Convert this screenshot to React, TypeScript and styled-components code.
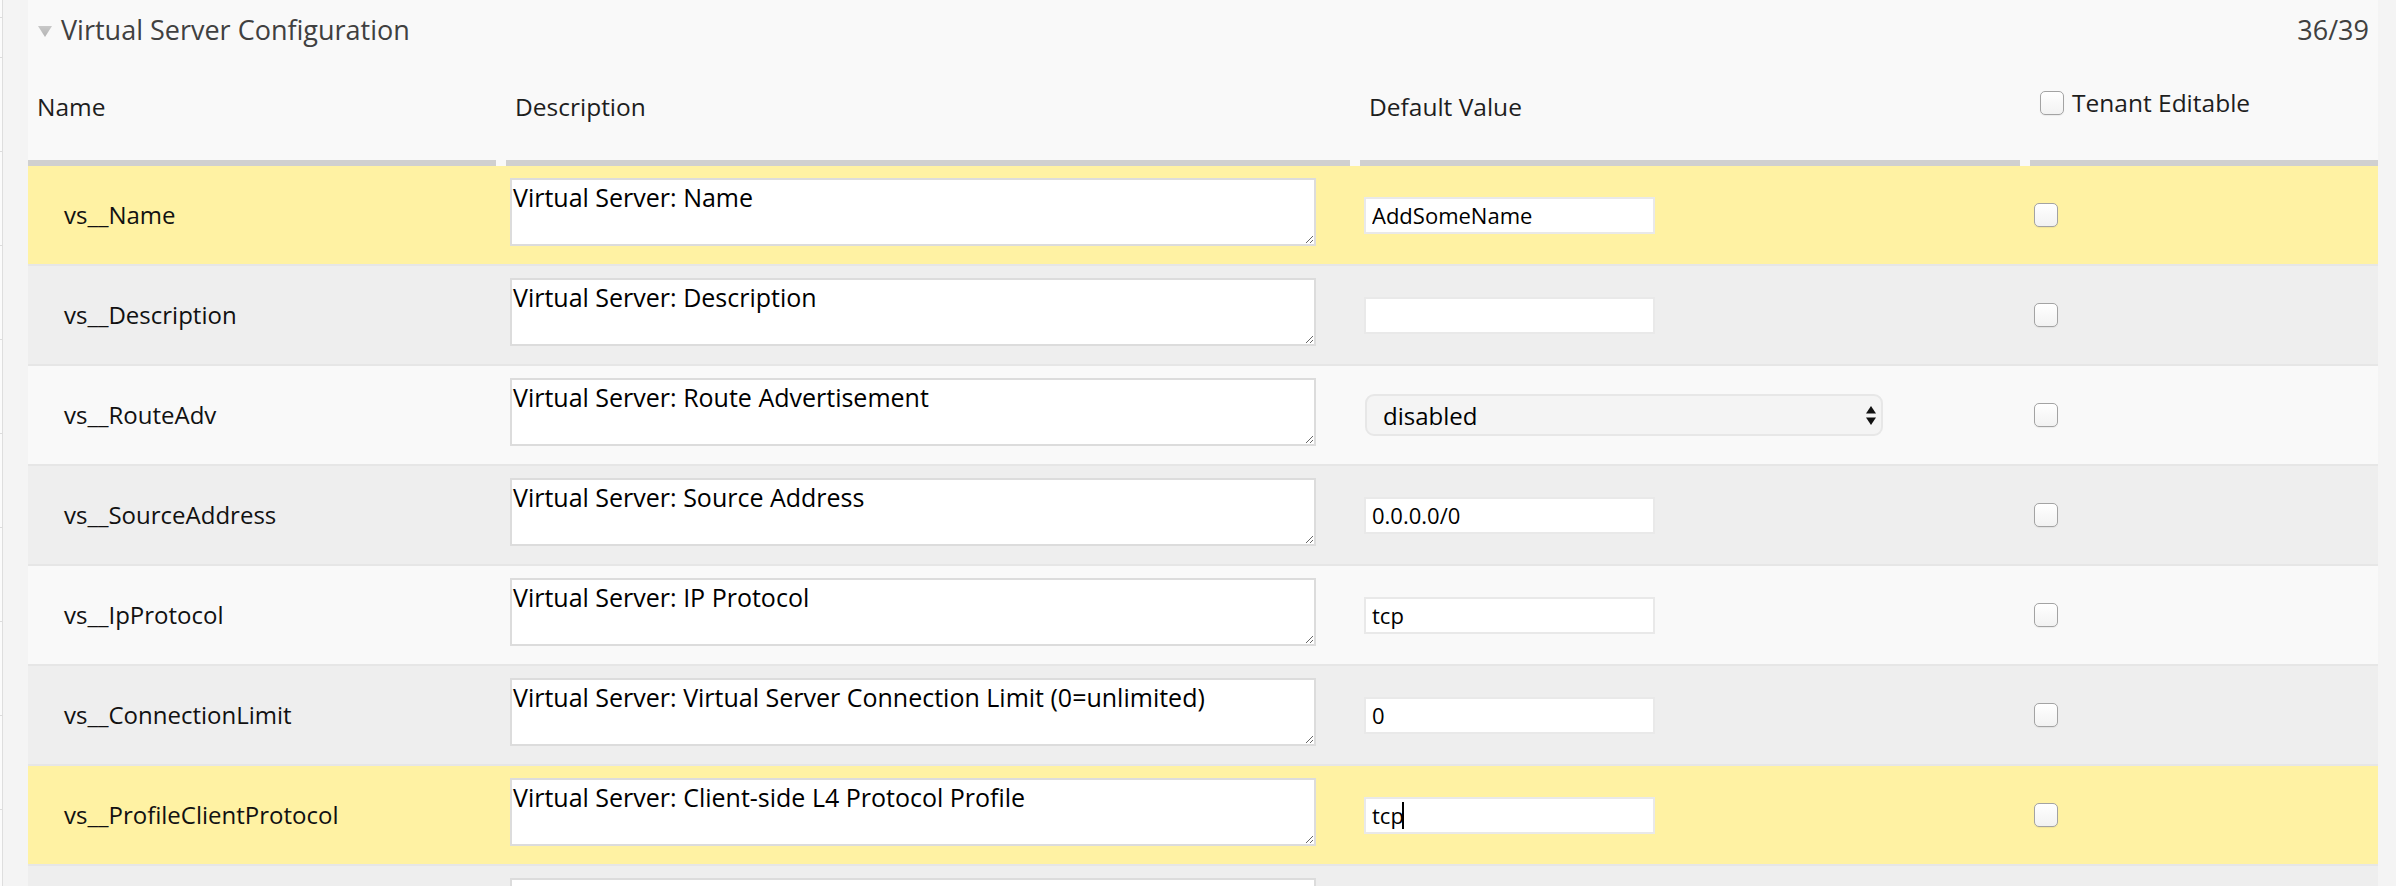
import React from "react";
import styled, { createGlobalStyle } from "styled-components";

const GlobalStyle = createGlobalStyle`
  html, body {
    margin: 0;
    padding: 0;
    overflow: hidden;
    background: #f9f9f9;
  }
  body {
    font-family: "Open Sans", "Liberation Sans", sans-serif;
  }
  *, *::before, *::after {
    box-sizing: border-box;
  }
`;

const COLUMNS = "468px 844px 660px 348px";

const Page = styled.div`
  display: flex;
  width: 2396px;
  height: 886px;
  overflow: hidden;
`;

const LeftRail = styled.div`
  flex: 0 0 28px;
  display: flex;
  background: #f4f4f4;
`;

const RailEdge = styled.div`
  width: 3px;
  background-image: repeating-linear-gradient(
    to bottom,
    #dcdcdc 0 1px,
    #fbfbfb 1px 94px
  );
  background-position: 0 57px;
  border-right: 1px solid #dedede;
`;

const RightRail = styled.div`
  flex: 0 0 18px;
  background: #f4f4f4;
`;

const Panel = styled.section`
  flex: 1 1 auto;
  min-width: 0;
  background: #f9f9f9;
`;

const TitleBar = styled.header`
  display: flex;
  justify-content: space-between;
  align-items: flex-start;
  height: 60px;
  padding: 12px 9px 0 10px;
  font-size: 27px;
  line-height: 36px;
  color: #404040;
`;

const TitleLeft = styled.div`
  display: flex;
  align-items: center;
  gap: 9px;
`;

const Caret = styled.svg`
  width: 14px;
  height: 11px;
  margin-top: 2px;
  display: block;
`;

const Counter = styled.span`
  color: #404040;
`;

const HeaderRow = styled.div`
  display: grid;
  grid-template-columns: ${COLUMNS};
  column-gap: 10px;
`;

const HeaderCell = styled.div<{ $top?: number }>`
  height: 106px;
  padding: ${(p) => p.$top ?? 31}px 10px 0 9px;
  border-bottom: 6px solid #d0d0d0;
  font-size: 24.5px;
  line-height: 32px;
  color: #1e1e1e;
`;

const HeaderLabel = styled.label`
  display: flex;
  align-items: center;
  gap: 8px;
  margin-left: 1px;
`;

const Row = styled.div<{ $tone: "yellow" | "dark" | "light" }>`
  display: grid;
  grid-template-columns: ${COLUMNS};
  column-gap: 10px;
  height: 100px;
  border-top: 2px solid #e6e6e6;
  background: ${(p) =>
    p.$tone === "yellow" ? "#fff2a3" : p.$tone === "dark" ? "#eeeeee" : "#f9f9f9"};

  &:first-child {
    height: 98px;
    border-top: 0;
  }
`;

const Cell = styled.div<{ $align?: "top" | "center" }>`
  display: flex;
  align-items: ${(p) => (p.$align === "top" ? "flex-start" : "center")};
  padding: ${(p) => (p.$align === "top" ? "12px 0 0 4px" : "0 0 0 4px")};
  min-width: 0;
`;

const NameCell = styled.div`
  display: flex;
  align-items: center;
  padding-left: 36px;
  font-size: 24px;
  line-height: 32px;
  color: #111;
  white-space: nowrap;
`;

const DescArea = styled.textarea`
  width: 806px;
  height: 68px;
  margin: 0;
  padding: 0 1px;
  border: 2px solid #dcdcdc;
  border-radius: 0;
  background: #fff;
  color: #000;
  font-family: "Open Sans", "Liberation Sans", sans-serif;
  font-size: 25px;
  line-height: 34px;
  resize: both;
  outline: none;
  overflow: hidden;
`;

const InputWrap = styled.div`
  position: relative;
  display: flex;
`;

const TextInput = styled.input`
  width: 291px;
  height: 37px;
  margin: 0;
  padding: 0 6px;
  border: 2px solid #e9e9e9;
  border-radius: 0;
  background: #fff;
  color: #000;
  font-family: "Open Sans", "Liberation Sans", sans-serif;
  font-size: 22px;
  outline: none;
`;

const TextCaret = styled.span`
  position: absolute;
  left: 38px;
  top: 5px;
  width: 2px;
  height: 27px;
  background: #000;
`;

const SelectWrap = styled.div`
  position: relative;
  width: 518px;
  height: 42px;
  margin-left: 1px;
`;

const Select = styled.select`
  appearance: none;
  -webkit-appearance: none;
  width: 100%;
  height: 100%;
  margin: 0;
  padding: 0 16px;
  border: 2px solid #e7e7e7;
  border-radius: 9px;
  background: #f4f4f4;
  color: #000;
  font-family: "Open Sans", "Liberation Sans", sans-serif;
  font-size: 24px;
  outline: none;
`;

const SelectArrows = styled.svg`
  position: absolute;
  right: 7px;
  top: 12px;
  width: 10px;
  height: 19px;
  pointer-events: none;
`;

const CheckBox = styled.input.attrs({ type: "checkbox" })`
  appearance: none;
  -webkit-appearance: none;
  flex: 0 0 auto;
  width: 24px;
  height: 24px;
  margin: 0;
  border: 1.5px solid #a3a3a3;
  border-radius: 5px;
  background: linear-gradient(#ffffff, #f2f2f2);
  box-shadow: 0 1px 1px rgba(0, 0, 0, 0.06);
`;

type Tone = "yellow" | "dark" | "light";

type Field = {
  id: string;
  name: string;
  desc: string;
  value: string;
  tone: Tone;
  kind?: "input" | "select";
  caret?: boolean;
};

const FIELDS: Field[] = [
  { id: "r1", name: "vs__Name", desc: "Virtual Server: Name", value: "AddSomeName", tone: "yellow" },
  { id: "r2", name: "vs__Description", desc: "Virtual Server: Description", value: "", tone: "dark" },
  {
    id: "r3",
    name: "vs__RouteAdv",
    desc: "Virtual Server: Route Advertisement",
    value: "disabled",
    tone: "light",
    kind: "select",
  },
  { id: "r4", name: "vs__SourceAddress", desc: "Virtual Server: Source Address", value: "0.0.0.0/0", tone: "dark" },
  { id: "r5", name: "vs__IpProtocol", desc: "Virtual Server: IP Protocol", value: "tcp", tone: "light" },
  {
    id: "r6",
    name: "vs__ConnectionLimit",
    desc: "Virtual Server: Virtual Server Connection Limit (0=unlimited)",
    value: "0",
    tone: "dark",
  },
  {
    id: "r7",
    name: "vs__ProfileClientProtocol",
    desc: "Virtual Server: Client-side L4 Protocol Profile",
    value: "tcp",
    tone: "yellow",
    caret: true,
  },
  { id: "r8", name: "", desc: "", value: "", tone: "dark" },
];

function ValueControl({ field }: { field: Field }) {
  if (field.kind === "select") {
    return (
      <SelectWrap>
        <Select defaultValue={field.value}>
          <option value="disabled">disabled</option>
          <option value="enabled">enabled</option>
        </Select>
        <SelectArrows viewBox="0 0 10 19">
          <polygon points="5,0 10,7.5 0,7.5" fill="#111" />
          <polygon points="0,11.5 10,11.5 5,19" fill="#111" />
        </SelectArrows>
      </SelectWrap>
    );
  }
  return (
    <InputWrap>
      <TextInput type="text" defaultValue={field.value} />
      {field.caret && <TextCaret />}
    </InputWrap>
  );
}

export default function App() {
  return (
    <>
      <GlobalStyle />
      <Page>
        <LeftRail>
          <RailEdge />
        </LeftRail>
        <Panel>
          <TitleBar>
            <TitleLeft>
              <Caret viewBox="0 0 14 11">
                <defs>
                  <linearGradient id="tri" x1="0" y1="0" x2="0" y2="1">
                    <stop offset="0" stopColor="#c9c9c9" />
                    <stop offset="1" stopColor="#b3b3b3" />
                  </linearGradient>
                </defs>
                <polygon points="0,0 14,0 7,11" fill="url(#tri)" />
              </Caret>
              <span>Virtual Server Configuration</span>
            </TitleLeft>
            <Counter>36/39</Counter>
          </TitleBar>

          <HeaderRow>
            <HeaderCell>Name</HeaderCell>
            <HeaderCell>Description</HeaderCell>
            <HeaderCell>Default Value</HeaderCell>
            <HeaderCell $top={27}>
              <HeaderLabel>
                <CheckBox />
                <span>Tenant Editable</span>
              </HeaderLabel>
            </HeaderCell>
          </HeaderRow>

          <div>
            {FIELDS.map((f) => (
              <Row key={f.id} $tone={f.tone}>
                <NameCell>{f.name}</NameCell>
                <Cell $align="top">
                  <DescArea defaultValue={f.desc} />
                </Cell>
                <Cell>
                  <ValueControl field={f} />
                </Cell>
                <Cell>
                  <CheckBox />
                </Cell>
              </Row>
            ))}
          </div>
        </Panel>
        <RightRail />
      </Page>
    </>
  );
}
